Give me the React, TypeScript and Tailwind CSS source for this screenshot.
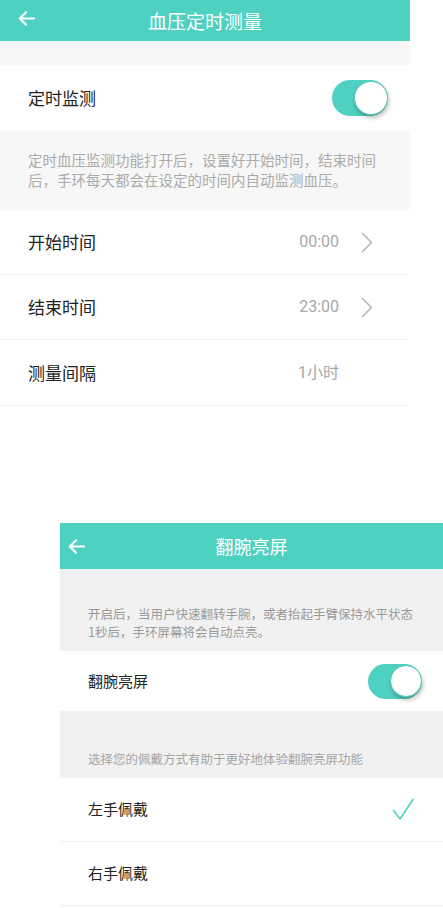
import React from "react";

const FONT = { fontFamily: '"Noto Sans CJK SC", "Noto Sans", sans-serif' };
const NUM = { fontFamily: 'Roboto, "Noto Sans CJK SC", sans-serif' };

function BackArrow({ size }: { size: number }) {
  return (
    <svg width={size} height={size} viewBox="0 0 20 20" fill="none">
      <path d="M18 10H3M9.5 3.5L3 10l6.5 6.5" stroke="white" strokeWidth="2.2" strokeLinecap="round" strokeLinejoin="round" />
    </svg>
  );
}

function Chevron() {
  return (
    <svg width="12" height="21" viewBox="0 0 12 21" fill="none">
      <path d="M1.5 1.5L10.5 10.5L1.5 19.5" stroke="#b5b5b5" strokeWidth="1.5" strokeLinecap="round" strokeLinejoin="round" />
    </svg>
  );
}

function Toggle({ w, h, k }: { w: string; h: string; k: string }) {
  return (
    <div className={`${w} ${h} rounded-full bg-[#4fd1c1] flex items-center justify-end`}>
      <div className={`${k} rounded-full bg-white border border-[#58c9bb] shadow-[1px_3px_4px_rgba(0,0,0,0.25)]`} />
    </div>
  );
}

function Check() {
  return (
    <svg width="22" height="23" viewBox="0 0 22 23" fill="none">
      <path d="M1.5 12.5L8 21L21 1.5" stroke="#4fd1c1" strokeWidth="1.6" strokeLinecap="round" strokeLinejoin="round" />
    </svg>
  );
}

export default function App() {
  return (
    <div className="w-[443px] h-[908px] bg-white overflow-hidden" style={FONT}>
      {/* Top screen */}
      <div className="w-[410px]">
        <div className="h-[41px] bg-[#4fd1c1] relative flex items-center justify-center">
          <div className="absolute left-[17px] top-[9px]">
            <BackArrow size={19} />
          </div>
          <span className="text-white text-[19px] leading-none">血压定时测量</span>
        </div>
        <div className="h-[24px] bg-[#f7f7f7]" />
        <div className="h-[65px] flex items-center justify-between pl-[28px] pr-[22px]">
          <span className="text-[17px] text-[#222]">定时监测</span>
          <Toggle w="w-[56px]" h="h-[36px]" k="w-[34px] h-[34px]" />
        </div>
        <div className="h-[80px] bg-[#f7f7f7] pl-[28px] pr-[20px] flex items-center">
          <p className="text-[14.5px] leading-[20px] text-[#ababab]">
            定时血压监测功能打开后，设置好开始时间，结束时间后，手环每天都会在设定的时间内自动监测血压。
          </p>
        </div>
        <div className="h-[65px] flex items-center pl-[28px] pr-[37px] border-b border-[#f0f0f0]">
          <span className="text-[17px] text-[#222] flex-1">开始时间</span>
          <span className="text-[16px] text-[#a8a8a8] mr-[22px]" style={NUM}>00:00</span>
          <Chevron />
        </div>
        <div className="h-[65px] flex items-center pl-[28px] pr-[37px] border-b border-[#f0f0f0]">
          <span className="text-[17px] text-[#222] flex-1">结束时间</span>
          <span className="text-[16px] text-[#a8a8a8] mr-[22px]" style={NUM}>23:00</span>
          <Chevron />
        </div>
        <div className="h-[66px] flex items-center pl-[28px] pr-[71px] border-b border-[#f0f0f0]">
          <span className="text-[17px] text-[#222] flex-1">测量间隔</span>
          <span className="text-[16px] text-[#a8a8a8]" style={NUM}>1小时</span>
        </div>
      </div>

      <div className="h-[117px]" />

      {/* Bottom screen */}
      <div className="ml-[60px] w-[383px]">
        <div className="h-[46px] bg-[#4fd1c1] relative flex items-center justify-center">
          <div className="absolute left-[7px] top-[14px]">
            <BackArrow size={19} />
          </div>
          <span className="text-white text-[18px] leading-none">翻腕亮屏</span>
        </div>
        <div className="h-[82px] bg-[#f1f1f1] pl-[28px] pr-[28px] pt-[36px]">
          <p className="text-[12.5px] leading-[18px] text-[#9a9a9a]">
            开启后，当用户快速翻转手腕，或者抬起手臂保持水平状态1秒后，手环屏幕将会自动点亮。
          </p>
        </div>
        <div className="h-[60px] flex items-center justify-between pl-[28px] pr-[21px]">
          <span className="text-[15px] text-[#222]">翻腕亮屏</span>
          <Toggle w="w-[54px]" h="h-[35px]" k="w-[32px] h-[32px]" />
        </div>
        <div className="h-[67px] bg-[#f1f1f1] pl-[28px] pt-[39px]">
          <p className="text-[12.5px] leading-[18px] text-[#a5a5a5]">选择您的佩戴方式有助于更好地体验翻腕亮屏功能</p>
        </div>
        <div className="h-[64px] flex items-center justify-between pl-[28px] pr-[29px] border-b border-[#f0f0f0]">
          <span className="text-[15px] text-[#222]">左手佩戴</span>
          <Check />
        </div>
        <div className="h-[64px] flex items-center pl-[28px] border-b border-[#f0f0f0]">
          <span className="text-[15px] text-[#222]">右手佩戴</span>
        </div>
      </div>
    </div>
  );
}
